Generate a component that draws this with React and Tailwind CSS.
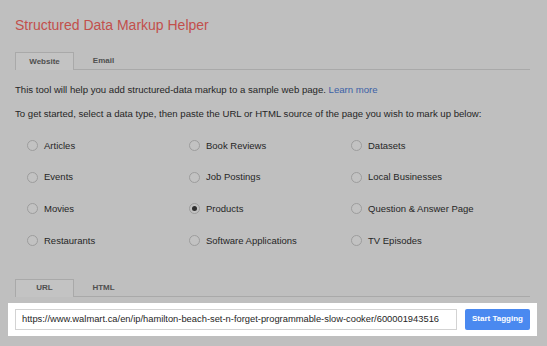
const rows = [
    ['Articles', 'Book Reviews', 'Datasets'],
    ['Events', 'Job Postings', 'Local Businesses'],
    ['Movies', 'Products', 'Question & Answer Page'],
    ['Restaurants', 'Software Applications', 'TV Episodes'],
];

function Tabs({ items }) {
    return (
        <div className="flex h-[18px] w-[515px] items-end border-b border-[#a9a9a9]">
            {items.map((label, i) => (
                <div
                    className={`-mb-px flex h-[18px] w-[59px] items-center justify-center text-[8px] font-bold text-[#4f4f4f] ${i === 0 ? 'border border-b-0 border-[#a9a9a9] bg-[#c3c3c3]' : ''}`}
                    key={label}
                >
                    {label}
                </div>
            ))}
        </div>
    );
}

function Radio({ label, checked }) {
    return (
        <label className="flex items-center gap-[6px] text-[9.5px] leading-[12px] text-[#262626]">
            <span className="flex h-[11px] w-[11px] items-center justify-center rounded-full border border-[#9d9d9d] bg-[#c2c2c2]">
                {checked && <span className="h-[5px] w-[5px] rounded-full bg-[#2e2e2e]" />}
            </span>
            {label}
        </label>
    );
}

export default function App() {
    return (
        <div className="h-[346px] w-[547px] overflow-hidden bg-[#bfbfbf] font-['Liberation_Sans',Arial,sans-serif]">
            <div className="px-[15px] pt-[17px]">
                <h1 className="text-[14px] leading-[16px] text-[#c24f4c]">Structured Data Markup Helper</h1>
                <div className="mt-[19px]">
                    <Tabs items={['Website', 'Email']} />
                </div>
                <p className="mt-[14px] text-[9.6px] leading-[12px] text-[#262626]">
                    This tool will help you add structured-data markup to a sample web page. <span className="text-[#3d5fa6]">Learn more</span>
                </p>
                <p className="mt-[12px] text-[9.6px] leading-[12px] text-[#262626]">
                    To get started, select a data type, then paste the URL or HTML source of the page you wish to mark up below:
                </p>
                <div className="mt-[10px] grid auto-rows-[31.6px] grid-cols-[162px_162px_162px] pl-[12px]">
                    {rows.flat().map((label) => (
                        <div className="flex items-center" key={label}>
                            <Radio checked={label === 'Products'} label={label} />
                        </div>
                    ))}
                </div>
                <div className="mt-[22.5px]">
                    <Tabs items={['URL', 'HTML']} />
                </div>
            </div>
            <div className="ml-[8px] mt-[6px] flex h-[33px] w-[529px] items-center bg-white pl-[7px]">
                <div className="flex h-[21px] w-[442px] items-center overflow-hidden whitespace-nowrap border border-[#d3d3d3] pl-[6px] text-[9.35px] text-[#262626]">
                    https://www.walmart.ca/en/ip/hamilton-beach-set-n-forget-programmable-slow-cooker/600001943516
                </div>
                <button className="ml-[8px] flex h-[21px] w-[65px] items-center justify-center rounded-[2px] bg-[#4a89f0] text-[8px] font-bold text-white" type="button">
                    Start Tagging
                </button>
            </div>
        </div>
    );
}
